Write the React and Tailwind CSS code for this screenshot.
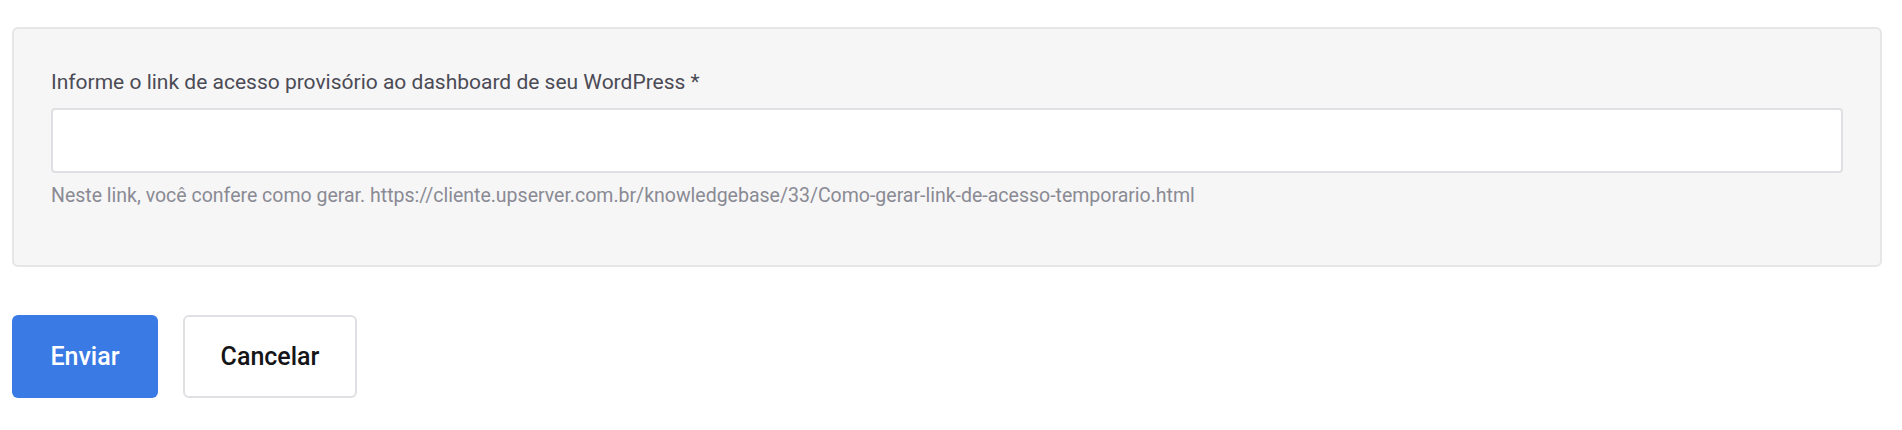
const App = () => {
  return (
    <div className="min-h-[430px] bg-white pl-3 pr-5 pt-[27px] font-['Roboto',sans-serif]">
      <div className="rounded-md border-2 border-[#e6e6e8] bg-[#f6f6f6] px-[37px] pt-[39px] pb-[56px]">
        <label className="block text-[21px] leading-[28px] text-[#4b4b55]">
          Informe o link de acesso provisório ao dashboard de seu WordPress *
        </label>
        <input
          type="text"
          className="mt-[12px] block h-[65px] w-full rounded border-2 border-[#e0e0e4] bg-white px-3 outline-none"
        />
        <p className="mt-[10px] text-[19.5px] leading-[26px] text-[#8a8a94]">
          Neste link, você confere como gerar. https://cliente.upserver.com.br/knowledgebase/33/Como-gerar-link-de-acesso-temporario.html
        </p>
      </div>
      <div className="mt-[48px] flex gap-[25px]">
        <button className="h-[83px] w-[146px] rounded-md bg-[#3a7ae4] text-[25px] font-medium text-white">
          Enviar
        </button>
        <button className="h-[83px] w-[174px] rounded-md border-2 border-[#e0e0e4] bg-white text-[25px] font-medium text-[#151518]">
          Cancelar
        </button>
      </div>
    </div>
  );
};

export default App;
